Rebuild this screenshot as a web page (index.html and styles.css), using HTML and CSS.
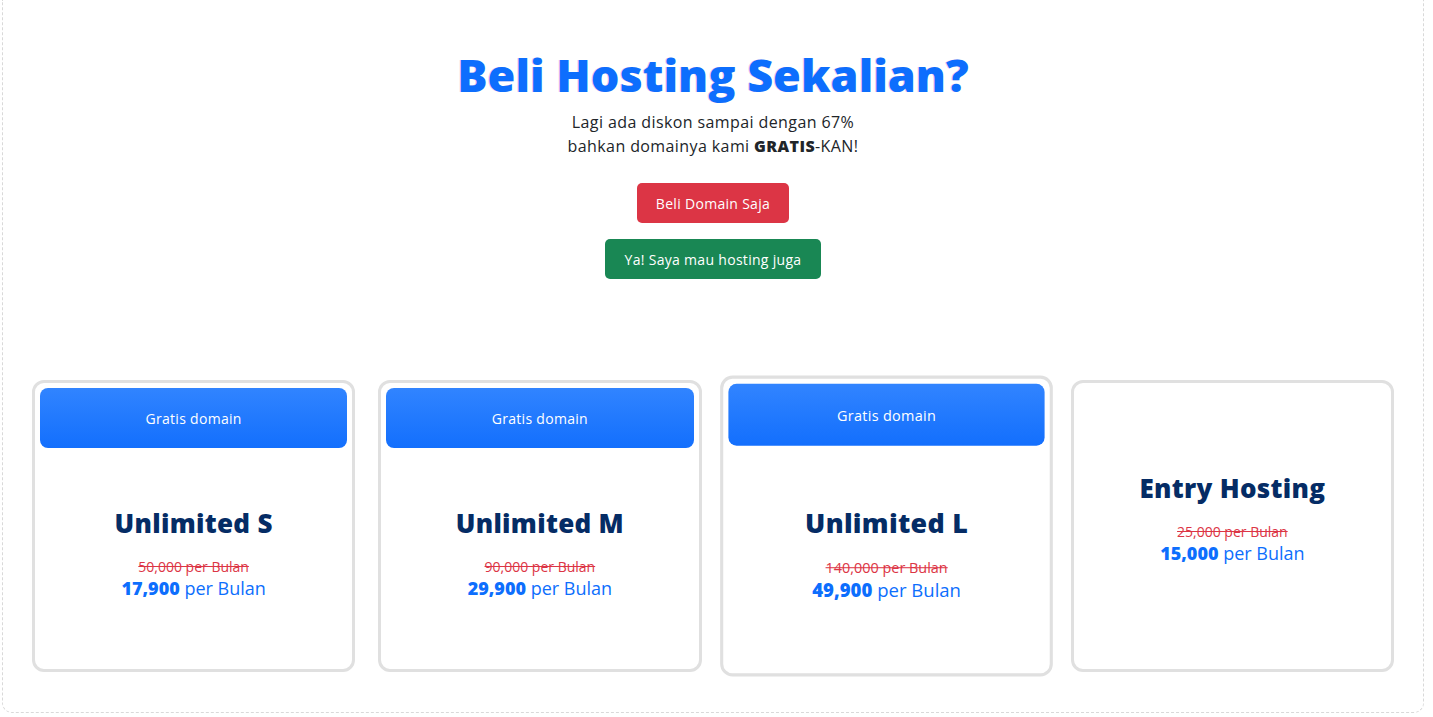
FILE: index.html
```html
<!DOCTYPE html>
<html lang="id">
<head>
    <meta charset="UTF-8">
    <meta name="viewport" content="width=device-width, initial-scale=1.0">
    <title>Beli Hosting Sekalian?</title>
    <link rel="stylesheet" href="styles.css">
</head>
<body>

    <main class="wrapper">

        <section class="hero">
            <h1>Beli Hosting Sekalian?</h1>
            <p>Lagi ada diskon sampai dengan 67%<br>bahkan domainya kami <b>GRATIS</b>-KAN!</p>
            <div class="actions">
                <button class="btn btn-red">Beli Domain Saja</button>
                <button class="btn btn-green">Ya! Saya mau hosting juga</button>
            </div>
        </section>

        <section class="plans">
            <div class="plan">
                <div class="plan-badge">Gratis domain</div>
                <div class="plan-body">
                    <h2>Unlimited S</h2>
                    <span class="old-price">50,000 per Bulan</span>
                    <span class="price"><b>17,900</b> per Bulan</span>
                </div>
            </div>

            <div class="plan">
                <div class="plan-badge">Gratis domain</div>
                <div class="plan-body">
                    <h2>Unlimited M</h2>
                    <span class="old-price">90,000 per Bulan</span>
                    <span class="price"><b>29,900</b> per Bulan</span>
                </div>
            </div>

            <div class="plan plan-active">
                <div class="plan-badge">Gratis domain</div>
                <div class="plan-body">
                    <h2>Unlimited L</h2>
                    <span class="old-price">140,000 per Bulan</span>
                    <span class="price"><b>49,900</b> per Bulan</span>
                </div>
            </div>

            <div class="plan plan-plain">
                <div class="plan-body">
                    <h2>Entry Hosting</h2>
                    <span class="old-price">25,000 per Bulan</span>
                    <span class="price"><b>15,000</b> per Bulan</span>
                </div>
            </div>
        </section>

    </main>

</body>
</html>
```

FILE: styles.css
```css
body {
    margin: 0;
    font-family: 'Open Sans', sans-serif;
    background-color: white;
    color: #212529;
}

.wrapper {
    margin: 0 9px 3px 2px;
    height: 713px;
    box-sizing: border-box;
    border: 1px dashed #d9d9d9;
    border-top: none;
    border-radius: 0 0 10px 10px;
}

.hero {
    display: flex;
    flex-direction: column;
    align-items: center;
    padding-top: 46px;
}

.hero h1 {
    margin: 0;
    font-size: 45px;
    font-weight: 800;
    line-height: 58px;
    color: #0d6efd;
    text-shadow: -1px 0 0 rgba(214, 51, 132, 0.25);
}

.hero p {
    margin: 6px 0 0;
    font-size: 16px;
    letter-spacing: 0.4px;
    line-height: 24px;
    text-align: center;
}

.hero p b {
    font-weight: 800;
}

.actions {
    display: flex;
    flex-direction: column;
    align-items: center;
    gap: 16px;
    margin-top: 25px;
}

.btn {
    font-family: inherit;
    font-size: 14px;
    letter-spacing: 0.3px;
    height: 40px;
    padding: 0 19px;
    color: white;
    border: none;
    border-radius: 5px;
}

.btn-red {
    background-color: #dc3545;
}

.btn-green {
    background-color: #198754;
    padding: 0 20px;
}

.plans {
    display: grid;
    grid-template-columns: repeat(4, 1fr);
    gap: 23px;
    padding: 0 29px;
    margin-top: 101px;
}

.plan {
    height: 292px;
    box-sizing: border-box;
    display: flex;
    flex-direction: column;
    border: 3px solid #e0e0e0;
    border-radius: 12px;
    padding: 5px;
    background-color: white;
}

.plan-active {
    transform: scale(1.03);
}

.plan-badge {
    height: 60px;
    display: flex;
    align-items: center;
    justify-content: center;
    border-radius: 8px;
    background: linear-gradient(#3184ff, #136ffd);
    color: white;
    font-size: 14px;
    letter-spacing: 0.3px;
}

.plan-body {
    flex: 1;
    display: flex;
    flex-direction: column;
    align-items: center;
    justify-content: center;
    padding-bottom: 8px;
}

.plan-plain .plan-body {
    padding-bottom: 18px;
}

.plan-body h2 {
    margin: 0 0 16px;
    font-size: 26px;
    font-weight: 800;
    letter-spacing: 0.3px;
    color: #052c65;
}

.old-price {
    font-size: 14px;
    color: #dc3545;
    text-decoration: line-through;
}

.price {
    font-size: 18px;
    color: #0d6efd;
}

.price b {
    font-weight: 800;
}
```
